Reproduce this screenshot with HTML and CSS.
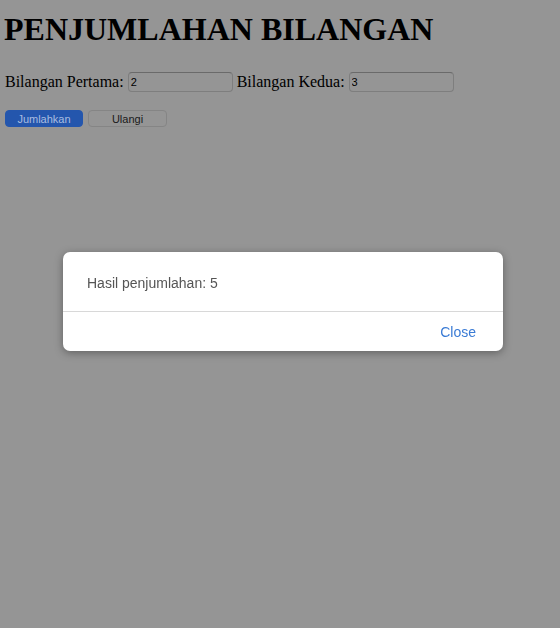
FILE: index.html
```html
<!DOCTYPE html>
<html lang="id">
<head>
<meta charset="utf-8">
<title>Penjumlahan Bilangan</title>
<link rel="stylesheet" href="styles.css">
</head>
<body>
<main class="page">
  <h1 class="title">PENJUMLAHAN BILANGAN</h1>
  <form class="form">
    <div class="row">
      <label class="label">Bilangan Pertama:</label>
      <input class="field" type="text" value="2">
      <label class="label">Bilangan Kedua:</label>
      <input class="field" type="text" value="3">
    </div>
    <div class="actions">
      <button type="button" class="btn btn-primary">Jumlahkan</button>
      <button type="button" class="btn">Ulangi</button>
    </div>
  </form>
</main>
<div class="overlay">
  <div class="dialog">
    <div class="dialog-body">Hasil penjumlahan: 5</div>
    <div class="dialog-footer"><span class="dialog-close">Close</span></div>
  </div>
</div>
</body>
</html>
```
FILE: styles.css
```css
html, body {
  margin: 0;
  height: 100%;
}
body {
  background: #959595;
  font-family: "Liberation Serif", "Times New Roman", serif;
  color: #000;
}
.page {
  padding: 0 4px;
}
.title {
  font-size: 32px;
  font-weight: bold;
  margin: 11px 0 0;
  line-height: 37px;
}
.form {
  margin-top: 23px;
}
.row {
  display: flex;
  align-items: center;
  font-size: 16px;
  height: 22px;
  padding-left: 1px;
}
.label {
  margin-right: 4px;
}
.field {
  width: 105px;
  height: 20px;
  box-sizing: border-box;
  margin: 0 4px 0 0;
  padding: 0 2px;
  background: #959595;
  border: 1px solid #7e7e7e;
  border-top-color: #6a6a6a;
  border-radius: 4px;
  font-family: "Liberation Sans", Arial, sans-serif;
  font-size: 11px;
  color: #000;
  outline: none;
}
.actions {
  display: flex;
  gap: 5px;
  margin-top: 17px;
  padding-left: 1px;
}
.btn {
  width: 79px;
  height: 17px;
  box-sizing: border-box;
  padding: 0;
  border: 1px solid #858585;
  border-radius: 4px;
  background: #959595;
  font-family: "Liberation Sans", Arial, sans-serif;
  font-size: 11px;
  color: #1a1a1a;
}
.btn-primary {
  width: 78px;
  background: #2456ad;
  border-color: #2456ad;
  color: #a9bde0;
}
.overlay {
  position: fixed;
  inset: 0;
  display: flex;
  justify-content: center;
  padding-top: 252px;
  align-items: flex-start;
}
.dialog {
  width: 440px;
  margin-left: 6px;
  background: #fff;
  border-radius: 7px;
  box-shadow: 0 2px 8px rgba(0,0,0,0.35);
  font-family: "Liberation Sans", Arial, sans-serif;
  font-size: 14px;
}
.dialog-body {
  height: 60px;
  box-sizing: border-box;
  padding: 23px 24px 0;
  color: #555;
  border-bottom: 1px solid #d8d8d8;
}
.dialog-footer {
  height: 39px;
  display: flex;
  justify-content: flex-end;
  align-items: center;
  padding-right: 27px;
}
.dialog-close {
  color: #3a7bd5;
}
```
